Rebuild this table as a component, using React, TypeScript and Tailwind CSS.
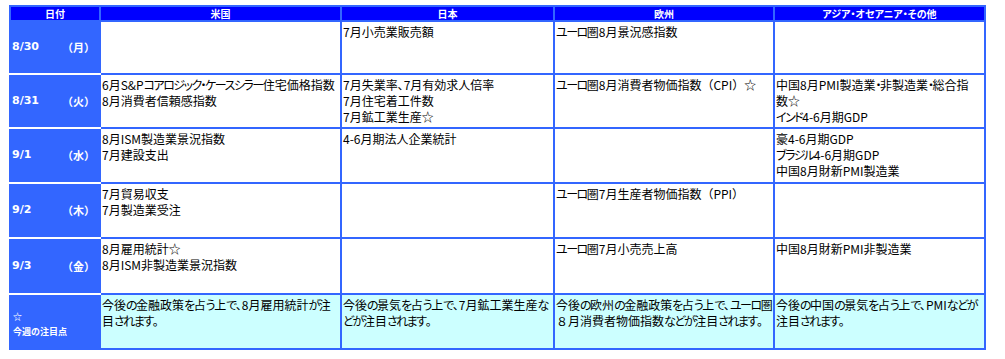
import React from 'react';

type Row = {
  date: string;
  day: string;
  h: string;
  us: string[];
  jp: string[];
  eu: string[];
  asia: string[];
};

const rows: Row[] = [
  { date: '8/30', day: '（月）', h: 'h-[53px]', us: [], jp: ['7月小売業販売額'], eu: ['ユーロ圏8月景況感指数'], asia: [] },
  {
    date: '8/31',
    day: '（火）',
    h: 'h-[54px]',
    us: ['6月S&Pコアロジック・ケースシラー住宅価格指数', '8月消費者信頼感指数'],
    jp: ['7月失業率、7月有効求人倍率', '7月住宅着工件数', '7月鉱工業生産☆'],
    eu: ['ユーロ圏8月消費者物価指数（CPI）☆'],
    asia: ['中国8月PMI製造業・非製造業・総合指', '数☆', 'インド4-6月期GDP'],
  },
  {
    date: '9/1',
    day: '（水）',
    h: 'h-[55px]',
    us: ['8月ISM製造業景況指数', '7月建設支出'],
    jp: ['4-6月期法人企業統計'],
    eu: [],
    asia: ['豪4-6月期GDP', 'ブラジル4-6月期GDP', '中国8月財新PMI製造業'],
  },
  {
    date: '9/2',
    day: '（木）',
    h: 'h-[55px]',
    us: ['7月貿易収支', '7月製造業受注'],
    jp: [],
    eu: ['ユーロ圏7月生産者物価指数（PPI）'],
    asia: [],
  },
  {
    date: '9/3',
    day: '（金）',
    h: 'h-[56px]',
    us: ['8月雇用統計☆', '8月ISM非製造業景況指数'],
    jp: [],
    eu: ['ユーロ圏7月小売売上高'],
    asia: ['中国8月財新PMI非製造業'],
  },
];

const notes = {
  us: ['今後の金融政策を占う上で、8月雇用統計が注', '目されます。'],
  jp: ['今後の景気を占う上で、7月鉱工業生産な', 'どが注目されます。'],
  eu: ['今後の欧州の金融政策を占う上で、ユーロ圏', '８月消費者物価指数などが注目されます。'],
  asia: ['今後の中国の景気を占う上で、PMIなどが', '注目されます。'],
};

const head =
  "border-2 border-[#3366ff] bg-[#0000ff] text-white font-bold text-[10px] leading-[11px] text-center p-0 [font-feature-settings:'palt']";
const cell = 'border-2 border-[#3366ff] align-top pl-[1px] pt-[2px] text-[12px] leading-[16px] text-black whitespace-nowrap';

// kana render narrower in the original font; brackets stay full width
const Line = ({ text }: { text: string }) => {
  const parts = text.split(/([\u3040-\u30ff]+|[、。])/);
  return (
    <div>
      {parts.map((p, i) => {
        if (i % 2 === 0) return <span key={i}>{p}</span>;
        if (p === '、' || p === '。')
          return (
            <span key={i} className="[font-feature-settings:'palt']">
              {p}
            </span>
          );
        return (
          <span key={i} className="[font-feature-settings:'palt'] tracking-[-1.5px]">
            {p}
          </span>
        );
      })}
    </div>
  );
};

const Lines = ({ lines }: { lines: string[] }) => (
  <>
    {lines.map((l, i) => (
      <Line key={i} text={l} />
    ))}
  </>
);

export default function App() {
  return (
    <div className="w-[1005px] h-[359px] bg-white pt-[5px] pl-[9px] font-['Noto_Sans_CJK_JP',sans-serif]">
      <table className="table-fixed border-collapse w-[975px]">
        <colgroup>
          <col className="w-[51px]" />
          <col className="w-[39px]" />
          <col className="w-[241px]" />
          <col className="w-[213px]" />
          <col className="w-[220px]" />
          <col className="w-[211px]" />
        </colgroup>
        <thead>
          <tr className="h-[15px]">
            <th colSpan={2} className={head}>日付</th>
            <th className={head}>米国</th>
            <th className={head}>日本</th>
            <th className={head}>欧州</th>
            <th className={head}>アジア・オセアニア・その他</th>
          </tr>
        </thead>
        <tbody>
          {rows.map((r) => (
            <tr key={r.date} className={r.h}>
              <td className="border-2 border-[#3366ff] border-b-white bg-[#3366ff] text-white font-bold text-[11px] font-['DejaVu_Sans',sans-serif] pl-[1px] align-middle">
                {r.date}
              </td>
              <td className="border-2 border-[#3366ff] border-b-white bg-[#3366ff] text-white font-bold text-[11px] font-['Noto_Sans_CJK_JP',sans-serif] align-middle whitespace-nowrap">
                {r.day}
              </td>
              <td className={cell}><Lines lines={r.us} /></td>
              <td className={cell}><Lines lines={r.jp} /></td>
              <td className={cell}><Lines lines={r.eu} /></td>
              <td className={cell}><Lines lines={r.asia} /></td>
            </tr>
          ))}
          <tr className="h-[55px]">
            <td colSpan={2} className="border-2 border-[#3366ff] bg-[#3366ff] text-white font-bold text-[9px] leading-[15px] pl-[2px] align-middle pt-[4px]">
              <div>☆</div>
              <div>今週の注目点</div>
            </td>
            <td className={`${cell} bg-[#ccffff]`}><Lines lines={notes.us} /></td>
            <td className={`${cell} bg-[#ccffff]`}><Lines lines={notes.jp} /></td>
            <td className={`${cell} bg-[#ccffff]`}><Lines lines={notes.eu} /></td>
            <td className={`${cell} bg-[#ccffff]`}><Lines lines={notes.asia} /></td>
          </tr>
        </tbody>
      </table>
    </div>
  );
}
